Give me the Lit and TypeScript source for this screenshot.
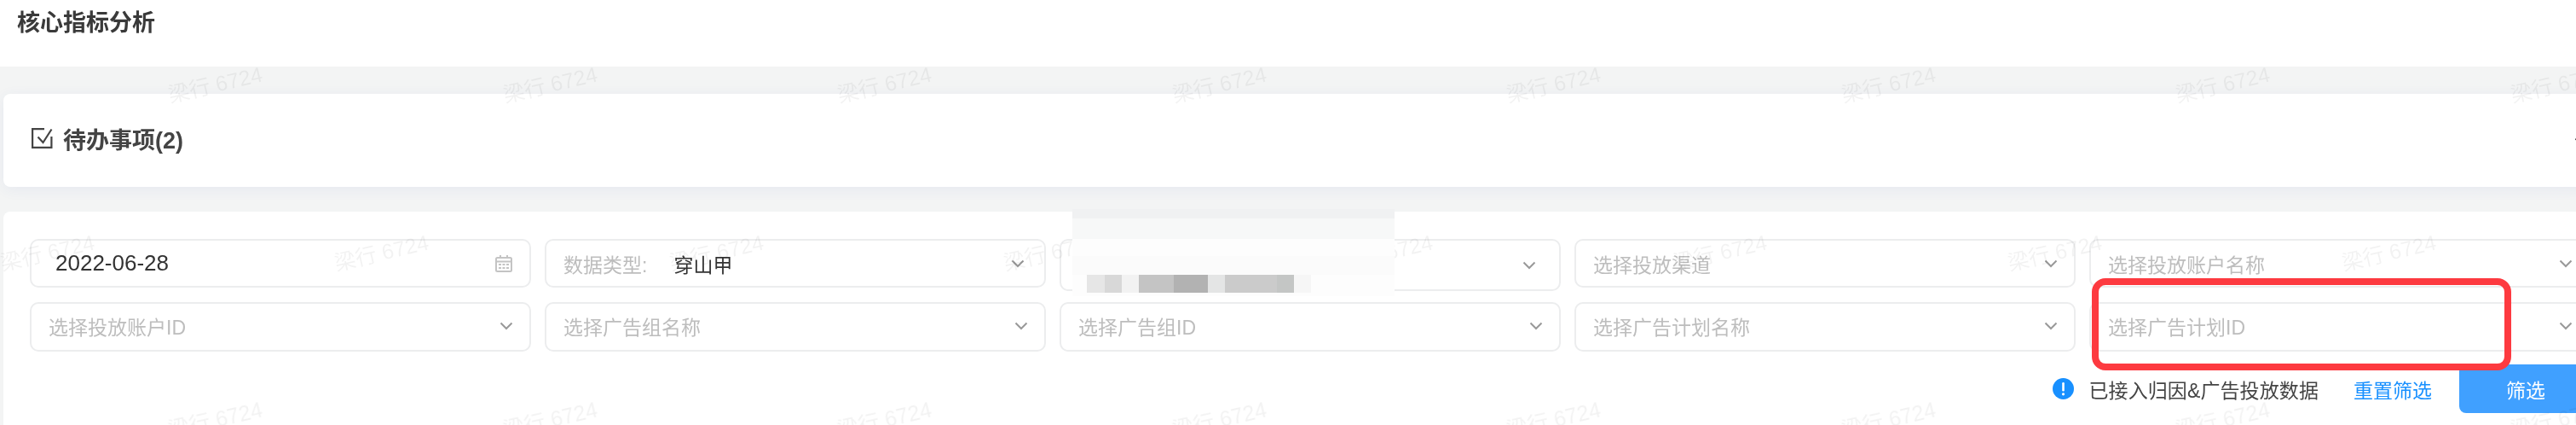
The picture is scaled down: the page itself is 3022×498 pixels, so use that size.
import { LitElement, html, css, svg } from 'lit';
import { customElement } from 'lit/decorators.js';

interface Field {
  placeholder?: string;
  label?: string;
  value?: string;
  date?: boolean;
  tall?: boolean;
  chevronPad?: number;
}

const FIELDS: Field[] = [
  { value: '2022-06-28', date: true },
  { label: '数据类型:', value: '穿山甲', chevronPad: 23 },
  { tall: true, chevronPad: 27 },
  { placeholder: '选择投放渠道' },
  { placeholder: '选择投放账户名称' },
  { placeholder: '选择投放账户ID' },
  { placeholder: '选择广告组名称' },
  { placeholder: '选择广告组ID' },
  { placeholder: '选择广告计划名称' },
  { placeholder: '选择广告计划ID' },
];

// [width, colour] of the mosaic blocks in the redacted area
const MOSAIC: [number, string][] = [
  [21, '#e6e6e6'],
  [20, '#d8d8d8'],
  [20, '#f2f2f2'],
  [41, '#c4c4c4'],
  [40, '#b2b2b2'],
  [20, '#e4e5e5'],
  [61, '#cbcbcb'],
  [20, '#c4c6c5'],
  [20, '#f6f6f6'],
];

const MARKS: [number, number][] = [];
for (let k = 0; k < 8; k++) {
  MARKS.push([252 + k * 392.5, 97]);
  MARKS.push([54.5 + k * 392.5, 294]);
  MARKS.push([252 + k * 392.5, 490]);
}

const chevron = svg`<svg class="chevron" width="16" height="10" viewBox="0 0 16 10"><path d="M1.5 1.5 8 8l6.5-6.5" fill="none" stroke="currentColor" stroke-width="2"/></svg>`;

const calendar = svg`<svg class="calendar" width="20" height="20" viewBox="0 0 20 20" fill="none" stroke="#c4c4c4" stroke-width="2"><rect x="1" y="3" width="18" height="16" rx="1.5"/><path d="M1 7.5h18M6 0v4M14 0v4"/><path d="M4 11h3M8.5 11h3M13 11h3M4 15h3M8.5 15h3M13 15h3" stroke-width="2"/></svg>`;

const checkbox = svg`<svg width="25" height="24" viewBox="0 0 25 24" fill="none" stroke="#444" stroke-width="2.2"><path d="M15 1.2H1.1v21.7h22.3V10"/><path d="M7.5 10.5l6 6.5L23.5 1.5"/></svg>`;

const info = svg`<svg width="25" height="25" viewBox="0 0 25 25"><circle cx="12.5" cy="12.5" r="12.5" fill="#1890ff"/><rect x="11.2" y="5" width="2.6" height="10.5" rx="1.2" fill="#fff"/><circle cx="12.5" cy="18.8" r="1.6" fill="#fff"/></svg>`;

@customElement('app-root')
export class AppRoot extends LitElement {
  static styles = css`
    :host {
      display: block;
      position: relative;
      width: 3022px;
      height: 498px;
      overflow: hidden;
      background: #fff;
      font-family: 'Liberation Sans', 'Noto Sans CJK SC', sans-serif;
      color: #333;
    }

    .page {
      width: 3022px;
      height: 498px;
      filter: blur(0.6px);
    }

    .header {
      height: 78px;
      box-sizing: border-box;
      padding: 12px 0 0 20px;
      font-size: 27px;
      line-height: 30px;
      font-weight: 700;
      color: #3a3a3a;
    }

    .main {
      width: 3040px;
      height: 420px;
      box-sizing: border-box;
      padding: 32px 0 0 4px;
      background: #f3f4f4;
    }

    .todo {
      display: flex;
      align-items: center;
      gap: 12px;
      height: 109px;
      box-sizing: border-box;
      padding: 0 4px 5px 33px;
      margin-bottom: 29px;
      background: #fff;
      border-radius: 8px;
      box-shadow: 0 3px 16px rgba(60, 80, 180, 0.07);
      font-size: 27px;
      font-weight: 700;
      color: #444;
    }

    .todo svg {
      flex: none;
    }

    .todo .arrow {
      margin-left: auto;
    }

    .todo .chevron {
      color: #333;
    }

    .filters {
      height: 250px;
      box-sizing: border-box;
      padding: 32px 0 0 31px;
      background: #fff;
      border-radius: 8px 0 0 0;
    }

    .grid {
      display: grid;
      grid-template-columns: repeat(5, 588px);
      grid-template-rows: 57px 58px;
      column-gap: 16px;
      row-gap: 17px;
    }

    .field {
      display: flex;
      align-items: center;
      box-sizing: border-box;
      height: 100%;
      padding: 0 19px 0 20px;
      border: 2px solid #ecedee;
      border-radius: 10px;
      font-size: 23px;
      white-space: nowrap;
    }

    .grid .field:nth-child(n + 6) {
      padding-bottom: 2px;
    }

    .field.tall {
      height: 61px;
    }

    .field.date {
      padding-left: 28px;
      padding-right: 20px;
      font-size: 26px;
    }

    .placeholder {
      color: #bdbdbd;
    }

    .value {
      margin-left: 31px;
      color: #333;
    }

    .date .value {
      margin-left: 0;
    }

    .chevron {
      flex: none;
      margin-left: auto;
      color: #999;
    }

    .calendar {
      flex: none;
      margin-left: auto;
    }

    .actions {
      display: flex;
      align-items: center;
      justify-content: flex-end;
      margin: 15px -1px 0 0;
      font-size: 23px;
    }

    .notice {
      display: flex;
      align-items: center;
      gap: 17px;
      color: #444;
      letter-spacing: 0.1px;
    }

    .reset {
      margin-left: 41px;
      color: #1890ff;
    }

    .submit {
      width: 156px;
      height: 57px;
      margin-left: 32px;
      border: none;
      border-radius: 8px 0 0 8px;
      background: #40a0ff;
      color: #fff;
      font: inherit;
    }

    .redacted {
      position: absolute;
      left: 1258px;
      top: 245px;
      width: 378px;
      height: 102px;
      background: linear-gradient(
        #f0f1f2 0 11px,
        #f7f8f8 11px 35px,
        #fdfdfd 35px 55px,
        #fbfbfb 55px 77px,
        #fdfdfd 77px
      );
    }

    .mosaic {
      display: flex;
      height: 21px;
      margin: 77px 0 0 17px;
    }

    .highlight {
      position: absolute;
      left: 2454px;
      top: 326px;
      width: 492px;
      height: 108px;
      box-sizing: border-box;
      border: 8px solid #fd3a40;
      border-radius: 16px;
    }

    .mark {
      position: absolute;
      transform: translate(-50%, -50%) rotate(-13deg);
      font-size: 25px;
      color: rgba(0, 0, 0, 0.05);
      white-space: nowrap;
      pointer-events: none;
    }
  `;

  private renderField(f: Field) {
    const pad = f.chevronPad ?? 19;
    return html`
      <div
        class="field ${f.tall ? 'tall' : ''} ${f.date ? 'date' : ''}"
        style=${f.date ? '' : `padding-right:${pad}px`}
      >
        ${f.placeholder ? html`<span class="placeholder">${f.placeholder}</span>` : ''}
        ${f.label ? html`<span class="placeholder">${f.label}</span>` : ''}
        ${f.value ? html`<span class="value">${f.value}</span>` : ''}
        ${f.date ? calendar : chevron}
      </div>
    `;
  }

  render() {
    return html`
      <div class="page">
        <div class="header">核心指标分析</div>
        <div class="main">
          <div class="todo">
            ${checkbox}
            <span>待办事项(2)</span>
            <span class="arrow">${chevron}</span>
          </div>
          <div class="filters">
            <div class="grid">${FIELDS.map((f) => this.renderField(f))}</div>
            <div class="actions">
              <div class="notice">${info}<span>已接入归因&广告投放数据</span></div>
              <span class="reset">重置筛选</span>
              <button class="submit">筛选</button>
            </div>
          </div>
        </div>
        ${MARKS.map(
          ([x, y]) => html`<div class="mark" style="left:${x}px;top:${y}px">梁行 6724</div>`
        )}
        <div class="redacted">
          <div class="mosaic">
            ${MOSAIC.map(
              ([w, c]) => html`<span style="width:${w}px;background:${c}"></span>`
            )}
          </div>
        </div>
        <div class="highlight"></div>
      </div>
    `;
  }
}
